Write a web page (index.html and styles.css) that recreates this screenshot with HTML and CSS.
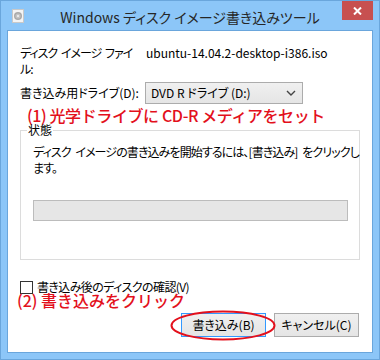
FILE: index.html
```html
<!DOCTYPE html>
<html lang="ja">
<head>
    <meta charset="UTF-8">
    <title>Windows ディスク イメージ書き込みツール</title>
    <link rel="stylesheet" href="styles.css">
</head>
<body>
    <div class="window">
        <div class="titlebar">
            <svg class="app-icon" width="12" height="14" viewBox="0 0 12 14">
                <rect x="0.5" y="0.5" width="11" height="13" fill="#f4f4f4" stroke="#c9c9c9"/>
                <circle cx="6" cy="7" r="4" fill="#a9a9a9"/>
                <circle cx="6" cy="7" r="2.6" fill="#c4c4c4"/>
                <circle cx="6" cy="7" r="1" fill="#f4f4f4"/>
            </svg>
            <div class="title">Windows ディスク イメージ書き込みツール</div>
            <div class="close-btn">
                <svg width="9" height="8" viewBox="0 0 9 8">
                    <path d="M1 0.5 L8 7.5 M8 0.5 L1 7.5" stroke="#fff" stroke-width="2"/>
                </svg>
            </div>
        </div>

        <div class="client">
            <div class="row file-row">
                <div class="label file-label">ディスク イメージ ファイル:</div>
                <div class="value">ubuntu-14.04.2-desktop-i386.iso</div>
            </div>

            <div class="row drive-row">
                <div class="label">書き込み用ドライブ(D):</div>
                <div class="select">
                    <span>DVD R ドライブ (D:)</span>
                    <svg width="10" height="6" viewBox="0 0 10 6">
                        <path d="M1 1 L5 5 L9 1" fill="none" stroke="#444" stroke-width="1.4"/>
                    </svg>
                </div>
            </div>

            <div class="note note-first">(1) 光学ドライブに CD-R メディアをセット</div>

            <fieldset class="status">
                <legend>状態</legend>
                <p class="status-text">ディスク イメージの書き込みを開始するには、[書き込み] をクリックし<br>ます。</p>
                <div class="progress"></div>
            </fieldset>

            <label class="verify">
                <span class="checkbox"></span>
                書き込み後のディスクの確認(V)
            </label>

            <div class="note note-second">(2) 書き込みをクリック</div>

            <div class="buttons">
                <button class="btn btn-default">書き込み(B)</button>
                <button class="btn">キャンセル(C)</button>
                <svg class="mark" width="106" height="31" viewBox="0 0 106 31">
                    <ellipse cx="53" cy="15.5" rx="51.5" ry="14" fill="none" stroke="#e3101c" stroke-width="2"/>
                </svg>
            </div>
        </div>
    </div>
</body>
</html>
```

FILE: styles.css
```css
* {
    margin: 0;
    padding: 0;
    box-sizing: border-box;
}

body {
    font-family: "Noto Sans CJK JP", "Noto Sans", sans-serif;
    font-feature-settings: "palt";
    font-size: 12px;
    line-height: 16px;
    color: #000;
    background: #fff;
}

.window {
    width: 380px;
    height: 360px;
    background: #8cc6f8;
    border: 1px solid #6aa6dc;
    display: flex;
    flex-direction: column;
}

.titlebar {
    height: 29px;
    display: flex;
    align-items: flex-start;
    position: relative;
}

.app-icon {
    margin: 8px 0 0 11px;
}

.title {
    position: absolute;
    left: 0;
    right: 0;
    top: 6px;
    text-align: center;
    font-size: 14px;
    line-height: 20px;
    color: #262626;
    pointer-events: none;
}

.close-btn {
    margin-left: auto;
    margin-right: 6px;
    width: 31px;
    height: 19px;
    background: #c75050;
    display: flex;
    align-items: center;
    justify-content: center;
}

/* client area */
.client {
    margin: 0 6px;
    height: 323px;
    background: #fff;
    border: 1px solid #6aa6dc;
    padding: 14px 13px 0 12px;
}

.row {
    display: flex;
    align-items: flex-start;
}

.file-label {
    flex: none;
    width: 126px;
    padding-right: 5px;
    letter-spacing: -1px;
    word-spacing: 2px;
}

.drive-row {
    margin-top: 5px;
    align-items: center;
}

.drive-row .label {
    width: 125px;
}

.select {
    width: 158px;
    height: 22px;
    border: 1px solid #acacac;
    background: linear-gradient(#f0f0f0, #e5e5e5);
    display: flex;
    align-items: center;
    justify-content: space-between;
    padding: 0 6px 0 5px;
}

.note {
    color: #e3101c;
    font-size: 16px;
    font-weight: 500;
    font-feature-settings: normal;
    line-height: 16px;
}

.note-first {
    margin: 3px 0 0 7px;
    letter-spacing: -0.4px;
}

.status {
    width: 340px;
    min-width: 0;
    border: 1px solid #dcdcdc;
    padding: 0 11px 38px 12px;
}

.status legend {
    margin-left: -6px;
    padding: 0 1px;
    line-height: 14px;
}

.status-text {
    margin-top: 7px;
    white-space: nowrap;
    letter-spacing: -0.9px;
    word-spacing: 3px;
}

.progress {
    margin-top: 24px;
    height: 21px;
    background: #e6e6e6;
    border: 1px solid #bcbcbc;
}

.verify {
    margin-top: 20px;
    display: flex;
    align-items: center;
    gap: 4px;
    line-height: 14px;
    letter-spacing: -0.6px;
}

.checkbox {
    width: 13px;
    height: 13px;
    border: 1px solid #333;
    background: #fff;
}

.note-second {
    margin-left: -3px;
    line-height: 13px;
}

.buttons {
    position: relative;
    margin-top: 6px;
    display: flex;
    justify-content: flex-end;
    gap: 8px;
}

.btn {
    width: 85px;
    height: 24px;
    font: inherit;
    font-feature-settings: "palt";
    border: 1px solid #acacac;
    background: linear-gradient(#f0f0f0, #e5e5e5);
    color: #000;
}

.btn-default {
    border-color: #3399ff;
}

.mark {
    position: absolute;
    left: 150px;
    top: -3px;
}
```
